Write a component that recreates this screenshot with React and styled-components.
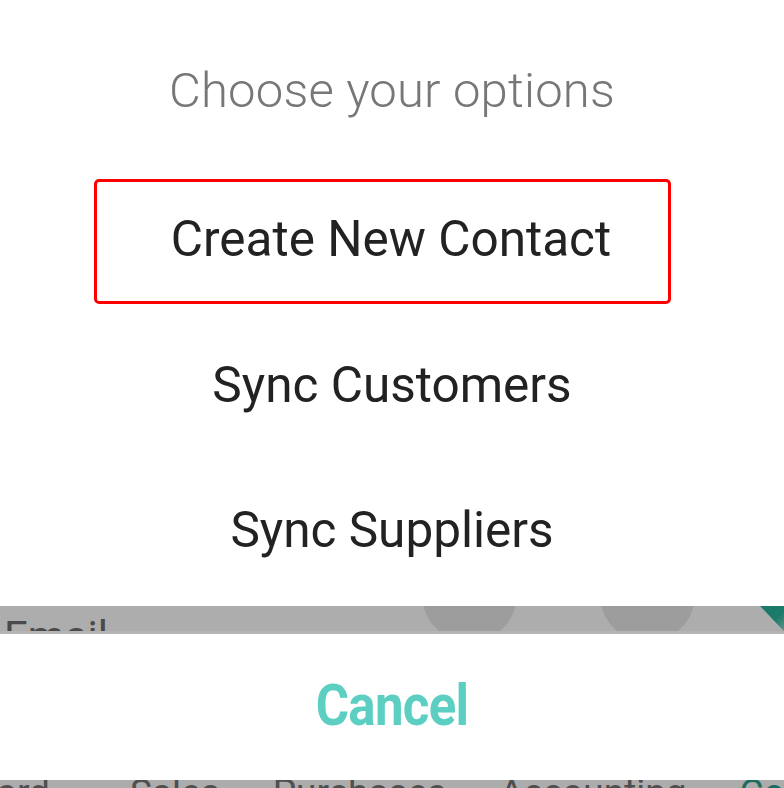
import React from "react";
import styled, { createGlobalStyle } from "styled-components";

const Global = createGlobalStyle`
  html, body { margin: 0; padding: 0; background: #ffffff; }
  body { font-family: Roboto, "Noto Sans", Arial, sans-serif; overflow: hidden; }
  #root { width: 784px; height: 788px; }
`;

const Screen = styled.div`
  width: 784px;
  height: 788px;
  display: flex;
  flex-direction: column;
  background: #adadad;
  overflow: hidden;
`;

const Sheet = styled.div`
  height: 606px;
  flex: none;
  background: #ffffff;
  display: flex;
  flex-direction: column;
  position: relative;
  z-index: 1;
`;

const Title = styled.h2`
  margin: 0;
  height: 166px;
  flex: none;
  display: flex;
  align-items: center;
  justify-content: center;
  padding-top: 14px;
  box-sizing: border-box;
  font-family: Roboto, sans-serif;
  font-weight: 300;
  font-size: 49px;
  color: #777777;
  letter-spacing: 0.2px;
`;

const OptionList = styled.div`
  display: flex;
  flex-direction: column;
`;

const Option = styled.div`
  height: 145px;
  flex: none;
  display: flex;
  align-items: center;
  justify-content: center;
  box-sizing: border-box;
  padding-top: 3px;
  font-family: Roboto, sans-serif;
  font-size: 49.5px;
  color: #222222;
  ${(p) =>
    p.$highlighted &&
    `
    height: 125px;
    margin: 13px 113px 7px 94px;
    border: 3px solid #ff0000;
    border-radius: 5px;
    padding: 0 0 5px 17px;
  `}
`;

const Backdrop = styled.div`
  height: 28px;
  flex: none;
  background: #adadad;
  display: flex;
  align-items: flex-start;
  position: relative;
  overflow: hidden;
  border-bottom: 3px solid #b4b4b4;
  box-sizing: border-box;
`;

const EmailLabel = styled.span`
  font-family: Roboto, sans-serif;
  font-size: 42px;
  line-height: 1;
  color: #4a4a4a;
  margin: 10px 0 0 4px;
`;

const Circle = styled.div`
  position: absolute;
  top: -59px;
  left: ${(p) => p.$x}px;
  width: 95px;
  height: 95px;
  border-radius: 50%;
  background: #9d9d9d;
`;

const Corner = styled.div`
  position: absolute;
  right: 0;
  top: 0;
  width: 24px;
  height: 28px;
  background: linear-gradient(135deg, #1c7a69 55%, #6a9a90 100%);
  clip-path: polygon(0 0, 100% 0, 100% 90%);
`;

const CancelSheet = styled.div`
  height: 146px;
  flex: none;
  background: #ffffff;
  display: flex;
  align-items: center;
  justify-content: center;
`;

const CancelButton = styled.button`
  border: none;
  background: none;
  padding: 0 0 4px;
  font-family: Roboto, sans-serif;
  font-weight: 700;
  font-size: 51px;
  color: #5ccfc2;
  letter-spacing: -0.7px;
  transform: scaleY(1.12);
`;

const TabStrip = styled.div`
  height: 8px;
  flex: none;
  background: #acacac;
  overflow: hidden;
  display: flex;
  gap: 53px;
  margin-left: -129px;
`;

const Tab = styled.span`
  font-family: Roboto, sans-serif;
  font-size: 37px;
  line-height: 1;
  margin-top: -6px;
  white-space: nowrap;
  color: ${(p) => (p.$active ? "#1b6d5f" : "#4f4f4f")};
  ${(p) => p.$wide && "margin-right: 27px;"}
`;

export default function App() {
  return (
    <>
      <Global />
      <Screen>
        <Sheet>
          <Title>Choose your options</Title>
          <OptionList>
            <Option $highlighted>Create New Contact</Option>
            <Option>Sync Customers</Option>
            <Option>Sync Suppliers</Option>
          </OptionList>
        </Sheet>
        <Backdrop>
          <EmailLabel>Email</EmailLabel>
          <Circle $x={422} />
          <Circle $x={600} />
          <Corner />
        </Backdrop>
        <CancelSheet>
          <CancelButton>Cancel</CancelButton>
        </CancelSheet>
        <TabStrip>
          <Tab $wide>Dashboard</Tab>
          <Tab>Sales</Tab>
          <Tab>Purchases</Tab>
          <Tab>Accounting</Tab>
          <Tab $active>Contacts</Tab>
        </TabStrip>
      </Screen>
    </>
  );
}
